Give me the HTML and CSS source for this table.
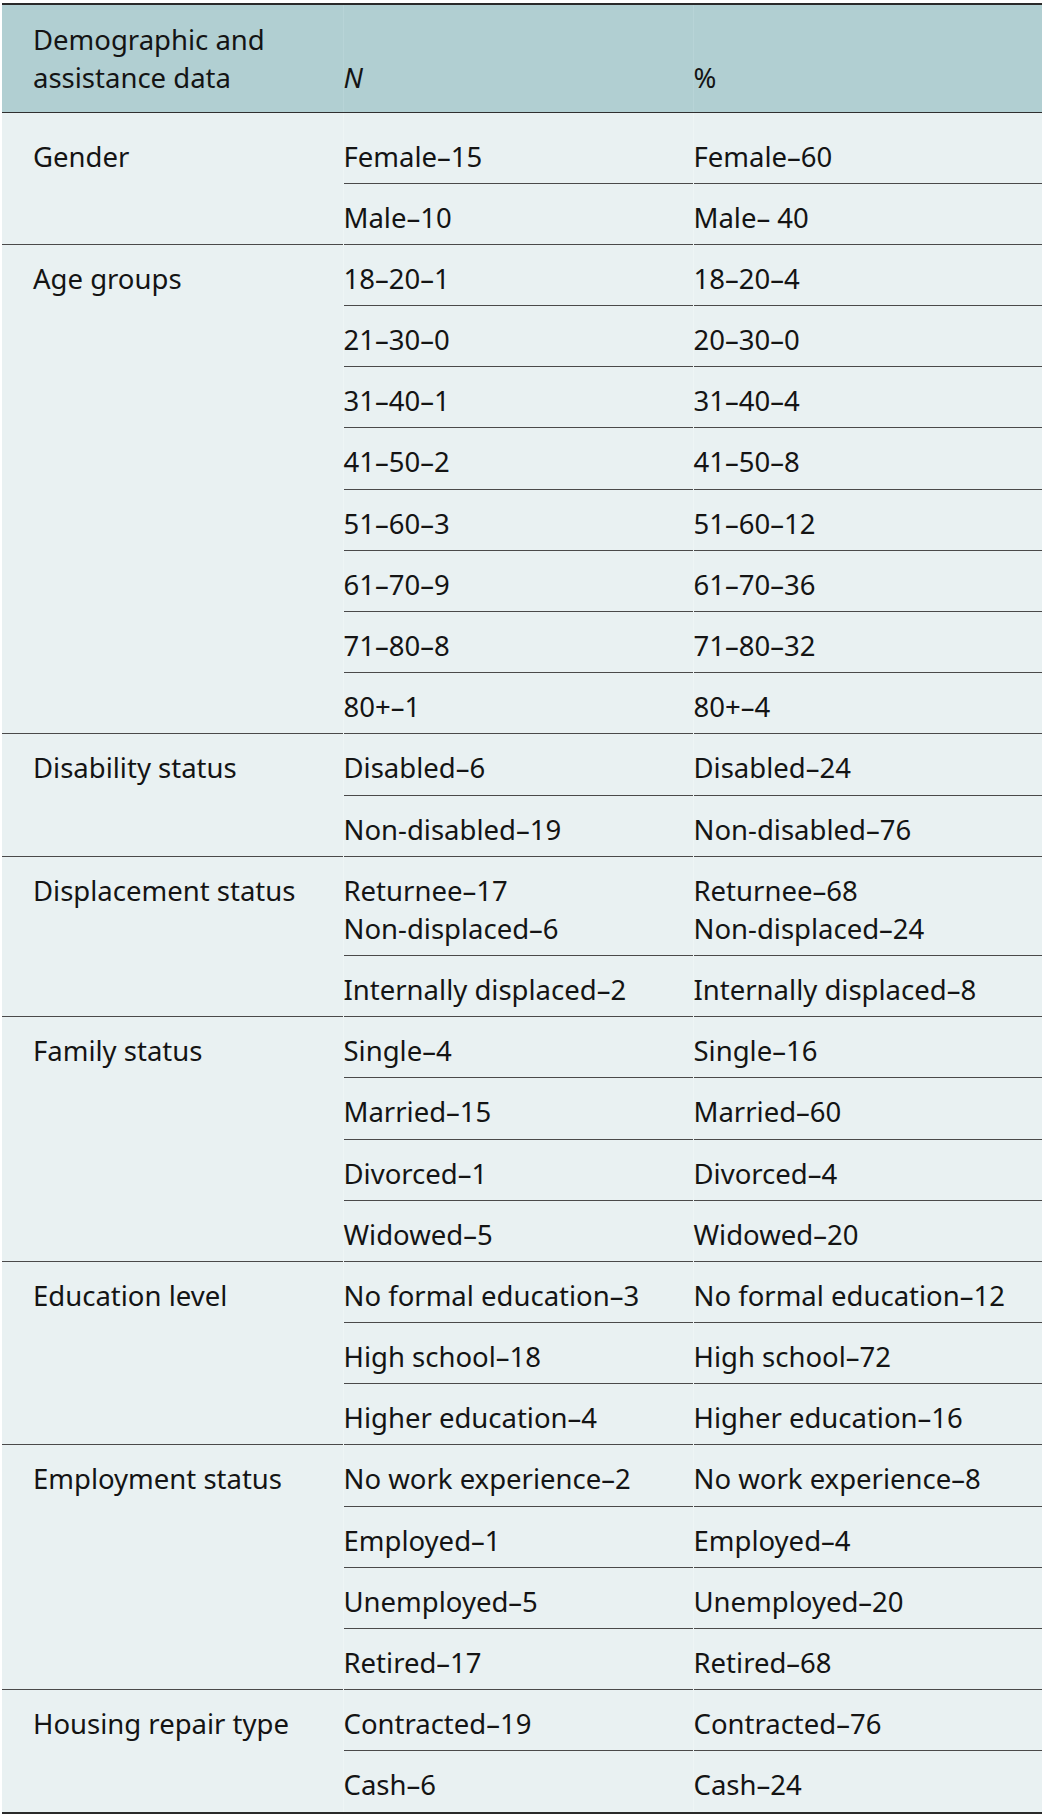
FILE: index.html
```html
<!DOCTYPE html>
<html lang="en">
<head>
<meta charset="utf-8">
<title>Demographic and assistance data</title>
<link rel="stylesheet" href="styles.css">
</head>
<body>
<table class="data-table">
  <colgroup>
    <col class="col-cat">
    <col class="col-n">
    <col class="col-pct">
  </colgroup>
  <thead>
    <tr>
      <th class="cat">Demographic and<br>assistance data</th>
      <th class="val"><i>N</i></th>
      <th class="val">%</th>
    </tr>
  </thead>
  <tbody>
    <tr class="group first">
      <td class="cat" rowspan="2">Gender</td>
      <td class="val">Female–15</td>
      <td class="val">Female–60</td>
    </tr>
    <tr class="sub">
      <td class="val">Male–10</td>
      <td class="val">Male– 40</td>
    </tr>

    <tr class="group">
      <td class="cat" rowspan="8">Age groups</td>
      <td class="val">18–20–1</td>
      <td class="val">18–20–4</td>
    </tr>
    <tr class="sub"><td class="val">21–30–0</td><td class="val">20–30–0</td></tr>
    <tr class="sub"><td class="val">31–40–1</td><td class="val">31–40–4</td></tr>
    <tr class="sub"><td class="val">41–50–2</td><td class="val">41–50–8</td></tr>
    <tr class="sub"><td class="val">51–60–3</td><td class="val">51–60–12</td></tr>
    <tr class="sub"><td class="val">61–70–9</td><td class="val">61–70–36</td></tr>
    <tr class="sub"><td class="val">71–80–8</td><td class="val">71–80–32</td></tr>
    <tr class="sub"><td class="val">80+–1</td><td class="val">80+–4</td></tr>

    <tr class="group">
      <td class="cat" rowspan="2">Disability status</td>
      <td class="val">Disabled–6</td>
      <td class="val">Disabled–24</td>
    </tr>
    <tr class="sub"><td class="val">Non-disabled–19</td><td class="val">Non-disabled–76</td></tr>

    <tr class="group">
      <td class="cat" rowspan="2">Displacement status</td>
      <td class="val">Returnee–17<br>Non-displaced–6</td>
      <td class="val">Returnee–68<br>Non-displaced–24</td>
    </tr>
    <tr class="sub"><td class="val">Internally displaced–2</td><td class="val">Internally displaced–8</td></tr>

    <tr class="group">
      <td class="cat" rowspan="4">Family status</td>
      <td class="val">Single–4</td>
      <td class="val">Single–16</td>
    </tr>
    <tr class="sub"><td class="val">Married–15</td><td class="val">Married–60</td></tr>
    <tr class="sub"><td class="val">Divorced–1</td><td class="val">Divorced–4</td></tr>
    <tr class="sub"><td class="val">Widowed–5</td><td class="val">Widowed–20</td></tr>

    <tr class="group">
      <td class="cat" rowspan="3">Education level</td>
      <td class="val">No formal education–3</td>
      <td class="val">No formal education–12</td>
    </tr>
    <tr class="sub"><td class="val">High school–18</td><td class="val">High school–72</td></tr>
    <tr class="sub"><td class="val">Higher education–4</td><td class="val">Higher education–16</td></tr>

    <tr class="group">
      <td class="cat" rowspan="4">Employment status</td>
      <td class="val">No work experience–2</td>
      <td class="val">No work experience–8</td>
    </tr>
    <tr class="sub"><td class="val">Employed–1</td><td class="val">Employed–4</td></tr>
    <tr class="sub"><td class="val">Unemployed–5</td><td class="val">Unemployed–20</td></tr>
    <tr class="sub"><td class="val">Retired–17</td><td class="val">Retired–68</td></tr>

    <tr class="group">
      <td class="cat" rowspan="2">Housing repair type</td>
      <td class="val">Contracted–19</td>
      <td class="val">Contracted–76</td>
    </tr>
    <tr class="sub"><td class="val">Cash–6</td><td class="val">Cash–24</td></tr>
  </tbody>
</table>
</body>
</html>
```

FILE: styles.css
```css
html, body {
  margin: 0;
  padding: 0;
  background: #ffffff;
}

body {
  padding: 3px 0 0 2px;
  font-family: "Noto Sans", "Open Sans", sans-serif;
  font-size: 27.5px;
  line-height: 38px;
  color: #141414;
}

.data-table {
  width: 1040px;
  border-collapse: collapse;
  table-layout: fixed;
  border-top: 2px solid #2a2a2a;
  border-bottom: 2px solid #2a2a2a;
}

.col-cat { width: 341px; }
.col-n { width: 350px; }
.col-pct { width: 349px; }

.data-table th,
.data-table td {
  text-align: left;
  font-weight: normal;
  padding: 15px 0 7.2px 0;
  vertical-align: top;
}

.data-table thead th {
  background: #b1cfd2;
  vertical-align: bottom;
  padding-top: 16px;
  padding-bottom: 15px;
  border-bottom: 1px solid #2f2f2f;
}

.data-table thead th.val {
  border-left: 1px solid #b8d4d7;
}

.data-table tbody td {
  background: #e9f1f2;
}

.data-table .cat {
  padding-left: 31px;
}

.data-table .val {
  padding-left: 0;
}

.data-table tbody td.val {
  border-left: 1px solid #eef5f5;
}

.data-table tr.group td,
.data-table tr.sub td {
  border-top: 1px solid #4a4a4a;
}

.data-table tr.first td {
  padding-top: 24.5px;
}
```
